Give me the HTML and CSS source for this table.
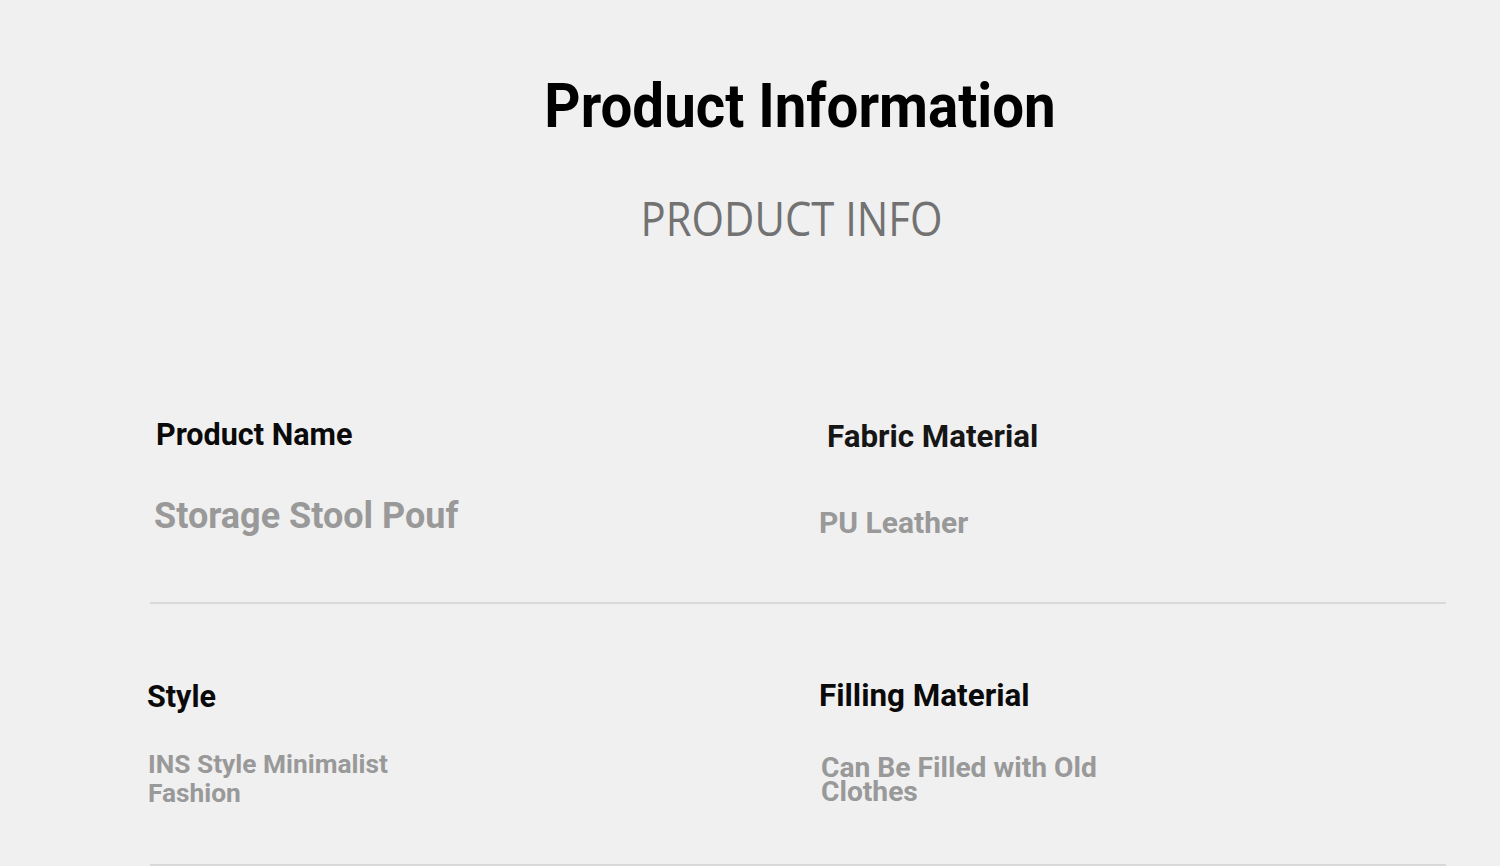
FILE: index.html
```html
<!DOCTYPE html>
<html lang="en">
<head>
  <meta charset="UTF-8">
  <meta name="viewport" content="width=device-width, initial-scale=1.0">
  <title>Product Information</title>
  <link rel="stylesheet" href="styles.css">
</head>
<body>
  <div class="page">
    <header class="intro">
      <h1>Product Information</h1>
      <p class="subtitle">PRODUCT INFO</p>
    </header>

    <section class="spec-row spec-row--first">
      <div class="spec spec--name">
        <h2 class="spec-label">Product Name</h2>
        <p class="spec-value">Storage Stool Pouf</p>
      </div>
      <div class="spec spec--fabric">
        <h2 class="spec-label">Fabric Material</h2>
        <p class="spec-value">PU Leather</p>
      </div>
    </section>

    <hr class="divider divider--first">

    <section class="spec-row spec-row--second">
      <div class="spec spec--style">
        <h2 class="spec-label">Style</h2>
        <p class="spec-value">INS Style Minimalist Fashion</p>
      </div>
      <div class="spec spec--filling">
        <h2 class="spec-label">Filling Material</h2>
        <p class="spec-value">Can Be Filled with Old Clothes</p>
      </div>
    </section>

    <hr class="divider divider--last">
  </div>
</body>
</html>
```

FILE: styles.css
```css
body {
  margin: 0;
  background: #f0f0f0;
  font-family: Roboto, "Liberation Sans", sans-serif;
}
.page {
  padding-top: 75px;
}
.intro {
  margin-left: 100px;
  text-align: center;
}
h1 {
  margin: 0;
  font-size: 62px;
  font-weight: 700;
  line-height: 1;
  color: #000;
  transform: scaleX(0.91);
}
.subtitle {
  margin: 58px 17px 0 0;
  font-family: "Open Sans", "Noto Sans", sans-serif;
  font-size: 47px;
  font-weight: 500;
  line-height: 1;
  color: #727272;
  transform: scaleX(0.89);
}
.spec-row {
  display: grid;
  grid-template-columns: 672px 1fr;
  padding-left: 146px;
}
.spec-row--first {
  margin-top: 178px;
}
.spec-row--second {
  margin-top: 76px;
}
.spec-label {
  margin: 0;
  font-weight: 700;
  line-height: 1;
  color: #0a0a0a;
}
.spec-value {
  margin: 0;
  font-weight: 700;
  line-height: 1;
  color: #999;
}
.spec--name {
  padding-left: 10px;
}
.spec--name .spec-label {
  font-size: 30.5px;
}
.spec--name .spec-value {
  margin: 47px 0 0 -2px;
  font-size: 36px;
}
.spec--fabric .spec-label {
  margin: 1px 0 0 9px;
  font-size: 31.3px;
  color: #161616;
}
.spec--fabric .spec-value {
  margin: 56px 0 0 1px;
  font-size: 30px;
}
.spec--style .spec-label {
  margin: 2px 0 0 1px;
  font-size: 30.5px;
}
.spec--style .spec-value {
  margin: 37px 0 0 2px;
  max-width: 300px;
  font-size: 26.3px;
  line-height: 28.7px;
}
.spec--filling .spec-label {
  margin-left: 1px;
  font-size: 31.4px;
}
.spec--filling .spec-value {
  margin: 44px 0 0 3px;
  max-width: 340px;
  font-size: 28.2px;
  line-height: 24px;
}
.divider {
  height: 2px;
  margin: 0 54px 0 150px;
  border: 0;
  background: #d9d9d9;
}
.divider--first {
  margin-top: 64px;
}
.divider--last {
  margin-top: 57px;
}
```
